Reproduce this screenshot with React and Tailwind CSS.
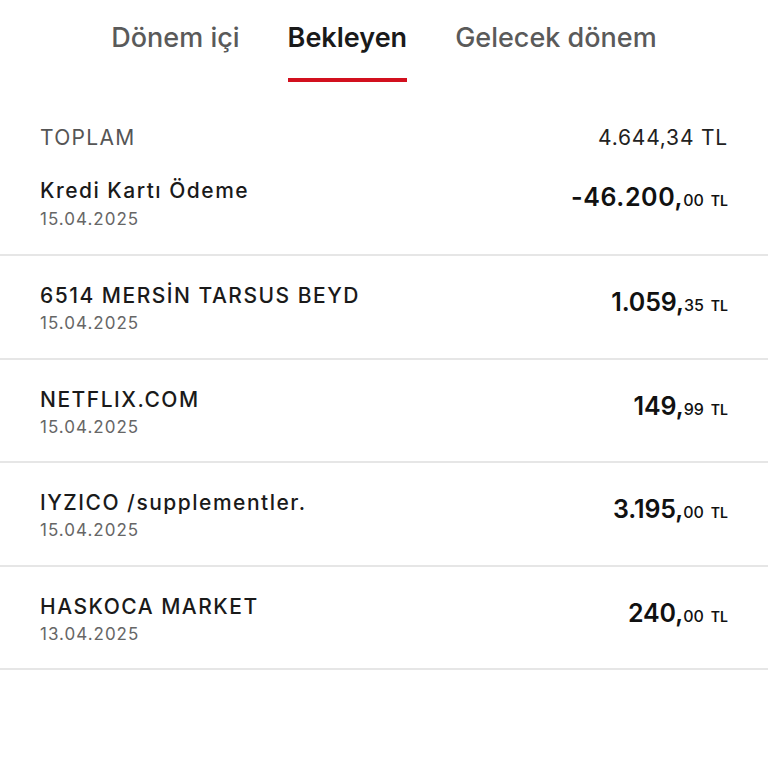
import React from 'react';

const tabs = ["Dönem içi", "Bekleyen", "Gelecek dönem"];

const rows = [
    { title: "6514 MERSİN TARSUS BEYD", date: "15.04.2025", whole: "1.059", cents: "35" },
    { title: "NETFLIX.COM", date: "15.04.2025", whole: "149", cents: "99" },
    { title: "IYZICO /supplementler.", date: "15.04.2025", whole: "3.195", cents: "00" },
    { title: "HASKOCA MARKET", date: "13.04.2025", whole: "240", cents: "00" },
];

const Amount = ({ whole, cents }) => (
    <div className="flex items-baseline text-[#111] pt-[2px]">
        <span className="text-[25px] font-semibold tracking-[-0.1px]">{whole},</span>
        <span className="text-[16px] font-medium">{cents}</span>
        <span className="text-[14px] font-semibold ml-[7px]">TL</span>
    </div>
);

const App = () => {
    return (
        <div className="w-[768px] h-[768px] bg-white font-['Inter',sans-serif] overflow-hidden">

            {/* Tabs */}
            <div className="flex justify-center gap-[48px] pt-[20px]">
                {tabs.map((tab, i) => (
                    <div key={tab} className="flex flex-col items-center">
                        <span className={`text-[27px] leading-[36px] ${i === 1 ? 'text-[#1a1a1a] font-semibold' : 'text-[#5a5a5a] font-medium'}`}>
                            {tab}
                        </span>
                        <div className={`h-[4px] w-full mt-[22px] ${i === 1 ? 'bg-[#d2101e]' : 'bg-transparent'}`} />
                    </div>
                ))}
            </div>

            {/* Total + first item */}
            <div className="px-[40px] pt-[42px] pb-[21px] border-b-2 border-[#e6e6e6]">
                <div className="flex justify-between items-center text-[21px] text-[#555] leading-[28px]">
                    <span className="tracking-[1.3px]">TOPLAM</span>
                    <span className="text-[#222] tracking-[0.8px]">4.644,34 TL</span>
                </div>
                <div className="flex justify-between items-start mt-[25px]">
                    <div className="flex flex-col">
                        <span className="text-[21px] leading-[28px] text-[#1a1a1a] font-medium tracking-[1.5px]">Kredi Kartı Ödeme</span>
                        <span className="text-[17px] leading-[28px] text-[#666] tracking-[1px]">15.04.2025</span>
                    </div>
                    <div className="flex items-baseline text-[#111] pt-[2px]">
                        <span className="text-[25px] font-semibold tracking-[0.6px]">-46.200,</span>
                        <span className="text-[16px] font-medium">00</span>
                        <span className="text-[14px] font-semibold ml-[7px]">TL</span>
                    </div>
                </div>
            </div>

            {/* Pending items */}
            {rows.map(row => (
                <div key={row.title} className="flex justify-between items-start px-[40px] pt-[26px] h-[103.5px] border-b-2 border-[#e6e6e6]">
                    <div className="flex flex-col">
                        <span className="text-[21px] leading-[28px] text-[#1a1a1a] font-medium tracking-[1.5px]">{row.title}</span>
                        <span className="text-[17px] leading-[27px] text-[#666] tracking-[1px]">{row.date}</span>
                    </div>
                    <Amount whole={row.whole} cents={row.cents} />
                </div>
            ))}

        </div>
    );
};

export default App;
